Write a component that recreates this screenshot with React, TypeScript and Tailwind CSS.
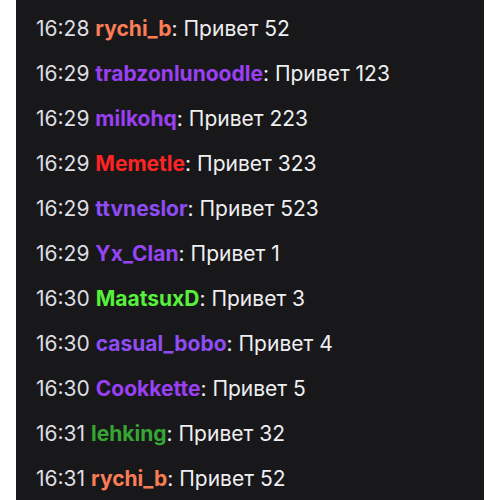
import React from 'react';

interface ChatLine {
  time: string;
  user: string;
  color: string;
  text: string;
}

const lines: ChatLine[] = [
  { time: '16:28', user: 'rychi_b', color: 'text-[#fa7d55]', text: 'Привет 52' },
  { time: '16:29', user: 'trabzonlunoodle', color: 'text-[#9a40f2]', text: 'Привет 123' },
  { time: '16:29', user: 'milkohq', color: 'text-[#9a40f2]', text: 'Привет 223' },
  { time: '16:29', user: 'Memetle', color: 'text-[#ff2424]', text: 'Привет 323' },
  { time: '16:29', user: 'ttvneslor', color: 'text-[#8f4cf5]', text: 'Привет 523' },
  { time: '16:29', user: 'Yx_Clan', color: 'text-[#9645f5]', text: 'Привет 1' },
  { time: '16:30', user: 'MaatsuxD', color: 'text-[#57f03a]', text: 'Привет 3' },
  { time: '16:30', user: 'casual_bobo', color: 'text-[#8f4cf5]', text: 'Привет 4' },
  { time: '16:30', user: 'Cookkette', color: 'text-[#9a40f2]', text: 'Привет 5' },
  { time: '16:31', user: 'lehking', color: 'text-[#36a532]', text: 'Привет 32' },
  { time: '16:31', user: 'rychi_b', color: 'text-[#fa7d55]', text: 'Привет 52' },
];

export default function App() {
  return (
    <div className="w-[500px] h-[500px] bg-white px-[16px] overflow-hidden">
      <div
        className="h-full bg-[#18181b] pt-[6px] pl-[20px]"
        style={{ fontFamily: 'Inter, "Noto Sans", sans-serif' }}
      >
        {lines.map((l, i) => (
          <div key={i} className="h-[45px] leading-[45px] text-[21px] whitespace-nowrap">
            <span className="text-[#dedee3]">{l.time}</span>{' '}
            <span className={`font-bold ${l.color}`}>{l.user}</span>
            <span className="text-[#efeff1]">: {l.text}</span>
          </div>
        ))}
      </div>
    </div>
  );
}
